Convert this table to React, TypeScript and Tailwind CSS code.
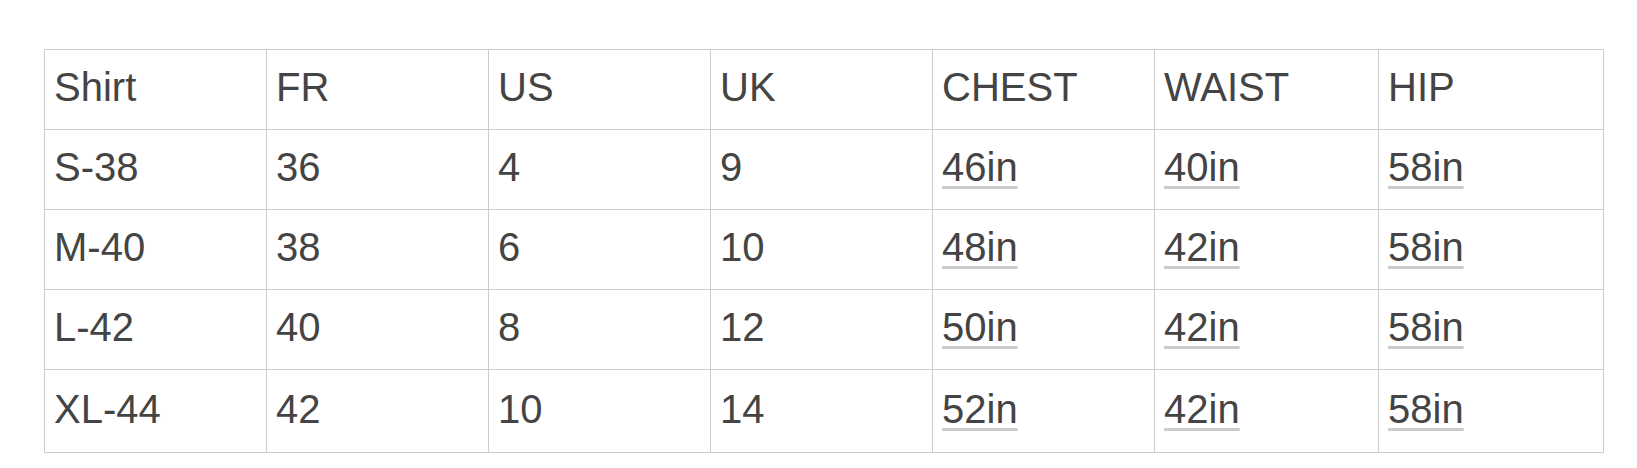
const header = ["Shirt", "FR", "US", "UK", "CHEST", "WAIST", "HIP"];
const widths = [
  "w-[222px]",
  "w-[222px]",
  "w-[222px]",
  "w-[222px]",
  "w-[222px]",
  "w-[224px]",
  "w-[225px]",
];

const rows = [
  ["S-38", "36", "4", "9", "46in", "40in", "58in"],
  ["M-40", "38", "6", "10", "48in", "42in", "58in"],
  ["L-42", "40", "8", "12", "50in", "42in", "58in"],
  ["XL-44", "42", "10", "14", "52in", "42in", "58in"],
];

const cellCls =
  "border border-[#cccccc] align-top pl-[9px] text-left font-normal";

const App = () => {
  return (
    <div
      className="bg-white min-h-[468px] pl-[44px] pt-[49px] text-[#444444] text-[40px]"
      style={{ fontFamily: '"Liberation Sans", Arial, sans-serif' }}
    >
      <table className="table-fixed border-collapse w-[1559px]">
        <thead>
          <tr>
            {header.map((h, i) => (
              <th key={h} className={`${cellCls} ${widths[i]} h-[80px] pt-[7px]`}>
                {h}
              </th>
            ))}
          </tr>
        </thead>
        <tbody>
          {rows.map((row, r) => (
            <tr key={row[0]}>
              {row.map((cell, i) => (
                <td
                  key={i}
                  className={`${cellCls} ${
                    r === rows.length - 1 ? "h-[83px] pt-[9px]" : "h-[80px] pt-[7px]"
                  }`}
                >
                  {i >= 4 ? (
                    <span className="underline decoration-[3px] decoration-[#cccccc] underline-offset-[5px]">
                      {cell}
                    </span>
                  ) : (
                    cell
                  )}
                </td>
              ))}
            </tr>
          ))}
        </tbody>
      </table>
    </div>
  );
};

export default App;
